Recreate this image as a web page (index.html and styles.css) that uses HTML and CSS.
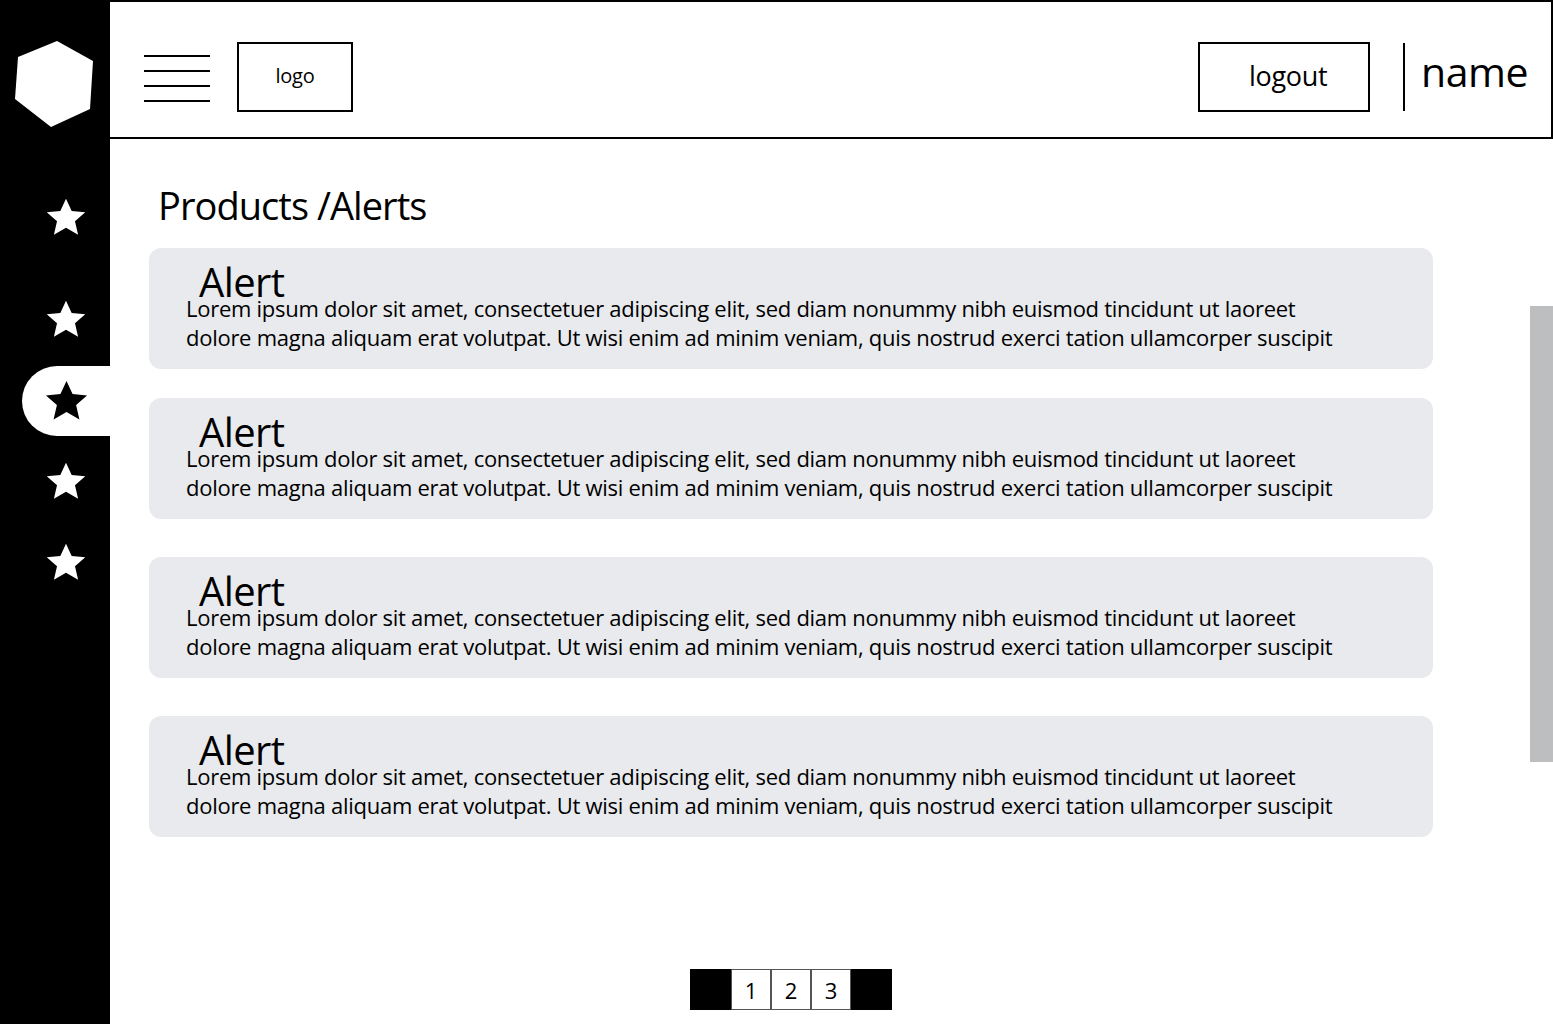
FILE: index.html
```html
<!DOCTYPE html>
<html lang="en">
<head>
<meta charset="utf-8">
<title>Products / Alerts</title>
<link rel="stylesheet" href="styles.css">
</head>
<body>
<div class="app">
  <aside class="sidebar">
    <div class="brand">
      <svg class="hex" width="80" height="90" viewBox="0 0 80 90"><polygon points="42,1 78,21 75,69 36,87 0,59 3,17" fill="#fff"/></svg>
    </div>
    <nav class="nav">
      <div class="nav-item first"><svg class="star" viewBox="0 0 24 24"><polygon points="12,1.5 15.1,8.2 22.5,8.9 16.9,13.8 18.6,21.2 12,17.3 5.4,21.2 7.1,13.8 1.5,8.9 8.9,8.2"/></svg></div>
      <div class="nav-item"><svg class="star" viewBox="0 0 24 24"><polygon points="12,1.5 15.1,8.2 22.5,8.9 16.9,13.8 18.6,21.2 12,17.3 5.4,21.2 7.1,13.8 1.5,8.9 8.9,8.2"/></svg></div>
      <div class="nav-item active"><svg class="star" viewBox="0 0 24 24"><polygon points="12,1.5 15.1,8.2 22.5,8.9 16.9,13.8 18.6,21.2 12,17.3 5.4,21.2 7.1,13.8 1.5,8.9 8.9,8.2"/></svg></div>
      <div class="nav-item"><svg class="star" viewBox="0 0 24 24"><polygon points="12,1.5 15.1,8.2 22.5,8.9 16.9,13.8 18.6,21.2 12,17.3 5.4,21.2 7.1,13.8 1.5,8.9 8.9,8.2"/></svg></div>
      <div class="nav-item"><svg class="star" viewBox="0 0 24 24"><polygon points="12,1.5 15.1,8.2 22.5,8.9 16.9,13.8 18.6,21.2 12,17.3 5.4,21.2 7.1,13.8 1.5,8.9 8.9,8.2"/></svg></div>
    </nav>
  </aside>
  <div class="main">
    <header class="topbar">
      <div class="burger"><span></span><span></span><span></span><span></span></div>
      <div class="logo">logo</div>
      <div class="spacer"></div>
      <div class="logout">logout</div>
      <div class="divider"></div>
      <div class="name">name</div>
    </header>
    <section class="content">
      <h1 class="title">Products /Alerts</h1>
      <div class="alerts">
        <div class="alert a1">
          <div class="alert-title">Alert</div>
          <p class="alert-text">Lorem ipsum dolor sit amet, consectetuer adipiscing elit, sed diam nonummy nibh euismod tincidunt ut laoreet<br>dolore magna aliquam erat volutpat. Ut wisi enim ad minim veniam, quis nostrud exerci tation ullamcorper suscipit</p>
        </div>
        <div class="alert a2">
          <div class="alert-title">Alert</div>
          <p class="alert-text">Lorem ipsum dolor sit amet, consectetuer adipiscing elit, sed diam nonummy nibh euismod tincidunt ut laoreet<br>dolore magna aliquam erat volutpat. Ut wisi enim ad minim veniam, quis nostrud exerci tation ullamcorper suscipit</p>
        </div>
        <div class="alert a3">
          <div class="alert-title">Alert</div>
          <p class="alert-text">Lorem ipsum dolor sit amet, consectetuer adipiscing elit, sed diam nonummy nibh euismod tincidunt ut laoreet<br>dolore magna aliquam erat volutpat. Ut wisi enim ad minim veniam, quis nostrud exerci tation ullamcorper suscipit</p>
        </div>
        <div class="alert a4">
          <div class="alert-title">Alert</div>
          <p class="alert-text">Lorem ipsum dolor sit amet, consectetuer adipiscing elit, sed diam nonummy nibh euismod tincidunt ut laoreet<br>dolore magna aliquam erat volutpat. Ut wisi enim ad minim veniam, quis nostrud exerci tation ullamcorper suscipit</p>
        </div>
      </div>
      <div class="pager">
        <span class="pg-end"></span>
        <span class="pg">1</span>
        <span class="pg">2</span>
        <span class="pg">3</span>
        <span class="pg-end"></span>
      </div>
    </section>
    <div class="scrollbar"></div>
  </div>
</div>
</body>
</html>
```

FILE: styles.css
```css
* { box-sizing: border-box; }
html, body { margin: 0; padding: 0; background: #fff; }
body {
  font-family: "Open Sans", "Noto Sans", "Liberation Sans", sans-serif;
  color: #000;
  width: 1553px;
  height: 1024px;
  overflow: hidden;
}
.app { display: flex; height: 1024px; }

.sidebar {
  width: 110px;
  flex: 0 0 110px;
  background: #000;
  display: flex;
  flex-direction: column;
}
.brand { padding: 40px 0 0 15px; height: 183px; }
.hex { display: block; }
.nav { display: flex; flex-direction: column; gap: 11px; }
.nav-item {
  height: 70px;
  display: flex;
  align-items: center;
  margin-left: 22px;
  padding-left: 22px;
}
.nav-item.first { margin-bottom: 21px; }
.star { width: 44px; height: 44px; fill: #fff; display: block; }
.nav-item.active {
  background: #fff;
  border-radius: 35px 0 0 35px;
}
.nav-item.active .star { fill: #000; width: 47px; height: 47px; margin-left: -1px; }

.main { flex: 1; position: relative; display: flex; flex-direction: column; }

.topbar {
  height: 139px;
  border: 2px solid #000;
  border-left: none;
  display: flex;
  align-items: center;
  padding: 0 23px 0 34px;
}
.burger {
  width: 66px;
  display: flex;
  flex-direction: column;
  gap: 13px;
  margin-top: 18px;
}
.burger span { display: block; height: 2px; background: #000; }
.logo {
  margin-left: 27px;
  width: 116px;
  height: 70px;
  border: 2px solid #000;
  display: flex;
  align-items: center;
  justify-content: center;
  font-size: 20px;
  margin-top: 14px;
  letter-spacing: -0.3px;
  padding-bottom: 2px;
}
.spacer { flex: 1; }
.logout {
  width: 172px;
  height: 70px;
  border: 2px solid #000;
  display: flex;
  align-items: center;
  justify-content: center;
  font-size: 27px;
  letter-spacing: -0.3px;
  margin-top: 14px;
  margin-right: 1px;
  padding: 0 0 3px 8px;
}
.divider {
  width: 2px;
  height: 68px;
  background: #000;
  margin-left: 32px;
  margin-top: 14px;
}
.name {
  margin-left: 16px;
  font-size: 41px;
  letter-spacing: -0.5px;
  line-height: 1;
  margin-top: 4px;
}

.content { padding: 0 0 0 39px; display: flex; flex-direction: column; }
.title {
  margin: 42px 0 0 9px;
  font-weight: 400;
  font-size: 38px;
  letter-spacing: -0.95px;
  line-height: 48px;
  height: 67px;
}
.alerts { width: 1284px; display: flex; flex-direction: column; }
.alert {
  height: 121px;
  background: #e8eaed;
  border-radius: 12px;
  padding: 19px 0 0 37px;
}
.a2 { margin-top: 29px; }
.a3 { margin-top: 38px; }
.a4 { margin-top: 38px; }
.alert-title {
  font-size: 40px;
  line-height: 26px;
  margin-left: 13px;
  letter-spacing: -0.6px;
  height: 27px;
  padding-top: 2px;
}
.alert-text {
  margin: 0;
  font-size: 22px;
  line-height: 29px;
  letter-spacing: -0.27px;
  white-space: nowrap;
}

.pager {
  width: 1284px;
  display: flex;
  justify-content: center;
  margin-top: 132px;
}
.pg-end { width: 41px; height: 41px; background: #000; }
.pg {
  width: 40px;
  height: 41px;
  border: 1.5px solid #555;
  border-left-width: 0.75px;
  border-right-width: 0.75px;
  display: flex;
  align-items: center;
  justify-content: center;
  font-size: 22px;
}

.scrollbar {
  position: absolute;
  left: 1420px;
  top: 306px;
  width: 23px;
  height: 456px;
  background: #bcbec0;
}
```
